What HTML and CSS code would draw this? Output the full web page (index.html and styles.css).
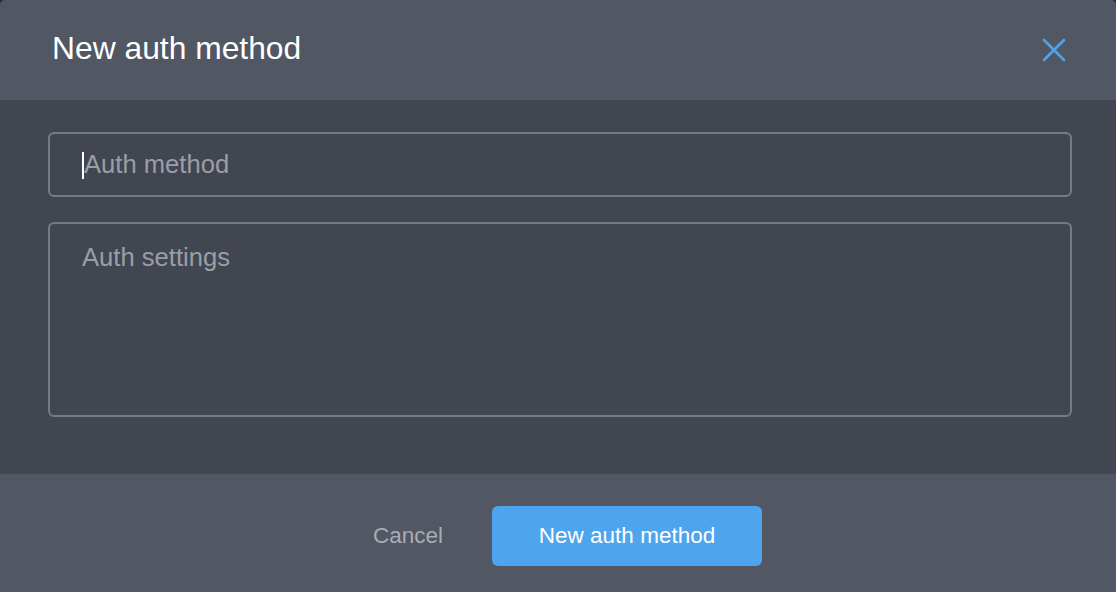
FILE: index.html
```html
<!DOCTYPE html>
<html>
<head>
<meta charset="utf-8">
<link rel="stylesheet" href="styles.css">
</head>
<body>
<div class="modal">
  <header class="modal-header">
    <h1 class="modal-title">New auth method</h1>
    <button class="close-btn" aria-label="Close">
      <svg width="24" height="24" viewBox="0 0 24 24"><path d="M2 2 L22 22 M22 2 L2 22" stroke="#4ea3ec" stroke-width="2.6" stroke-linecap="round" fill="none"/></svg>
    </button>
  </header>
  <section class="modal-body">
    <div class="field field-input"><span class="caret"></span><span class="placeholder">Auth method</span></div>
    <div class="field field-area"><span class="placeholder">Auth settings</span></div>
  </section>
  <footer class="modal-footer">
    <button class="btn btn-cancel">Cancel</button>
    <button class="btn btn-primary">New auth method</button>
  </footer>
</div>
</body>
</html>
```

FILE: styles.css
```css
html, body {
  margin: 0;
  padding: 0;
  background: #2b2e35;
}
body {
  font-family: "Liberation Sans", Arial, sans-serif;
  width: 1116px;
  height: 592px;
  overflow: hidden;
}
.modal {
  width: 1116px;
  height: 592px;
  display: flex;
  flex-direction: column;
  border-radius: 5px 5px 0 0;
  overflow: hidden;
}
.modal-header {
  height: 100px;
  background: #515763;
  display: flex;
  align-items: center;
  justify-content: space-between;
  padding: 0 50px 0 52px;
  box-sizing: border-box;
}
.modal-title {
  margin: 0;
  font-size: 31.8px;
  font-weight: normal;
  color: #ffffff;
  line-height: 1;
  padding-bottom: 2px;
}
.close-btn {
  background: none;
  border: none;
  padding: 0;
  width: 24px;
  height: 24px;
  display: flex;
  cursor: pointer;
}
.modal-body {
  height: 374px;
  background: #414650;
  padding: 32px 44px 0 48px;
  box-sizing: border-box;
  display: flex;
  flex-direction: column;
  gap: 25px;
}
.field {
  border: 2px solid #767a83;
  border-radius: 6px;
  box-sizing: border-box;
  padding-left: 32px;
  font-size: 25.6px;
  color: #9b9ea6;
  display: flex;
}
.field-input {
  height: 65px;
  align-items: center;
}
.field-area {
  height: 195px;
  align-items: flex-start;
  padding-top: 21px;
}
.caret {
  width: 2px;
  height: 27px;
  background: #ffffff;
  margin-top: 2px;
}
.placeholder {
  line-height: 1;
}
.modal-footer {
  flex: 1;
  background: #515763;
  display: flex;
  justify-content: center;
  align-items: center;
  padding: 6px 10px 0 0;
  gap: 20px;
}
.btn {
  font-family: "Liberation Sans", Arial, sans-serif;
  font-size: 22.5px;
  border: none;
  cursor: pointer;
}
.btn-cancel {
  background: none;
  color: #a9acb3;
  padding: 0 29px;
  height: 60px;
}
.btn-primary {
  width: 270px;
  height: 60px;
  background: #4fa4ee;
  color: #ffffff;
  border-radius: 6px;
}
```
